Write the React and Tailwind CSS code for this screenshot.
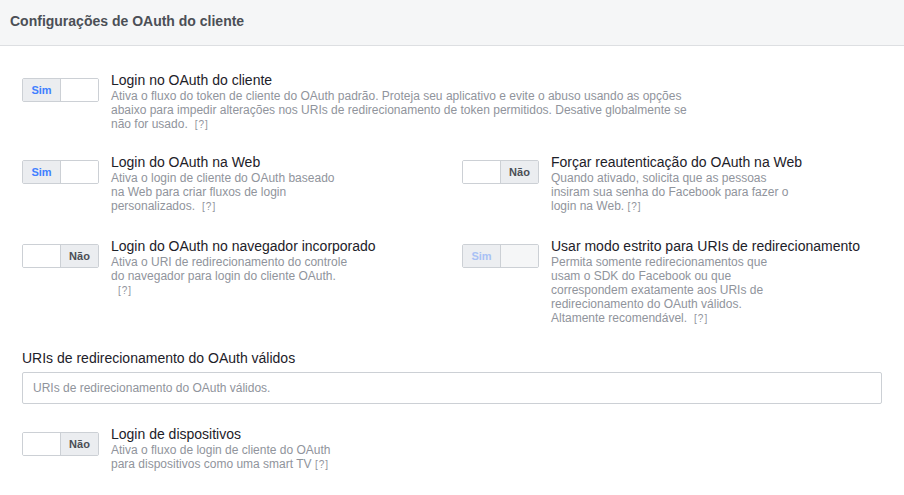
import React from "react";

const font = { fontFamily: '"Liberation Sans", Arial, Helvetica, sans-serif' };

function Toggle({ on, disabled }) {
  if (on) {
    return (
      <div className="flex w-[77px] h-[24px] shrink-0 border border-[#ccd0d5] rounded-[2px] overflow-hidden">
        <div
          className={`w-[38px] flex items-center justify-center text-[11px] font-bold border-r border-[#ccd0d5] ${
            disabled ? "bg-[#eceef1] text-[#a8c1f5]" : "bg-[#ebedf0] text-[#4080ff]"
          }`}
        >
          Sim
        </div>
        <div className={`flex-1 ${disabled ? "bg-[#f5f6f7]" : "bg-white"}`} />
      </div>
    );
  }
  return (
    <div className="flex w-[77px] h-[24px] shrink-0 border border-[#ccd0d5] rounded-[2px] overflow-hidden">
      <div className="w-[38px] bg-white border-r border-[#ccd0d5]" />
      <div className="flex-1 bg-[#ebedf0] flex items-center justify-center text-[11px] font-bold text-[#4b4f56]">
        Não
      </div>
    </div>
  );
}

function Help({ spaced = true }) {
  return spaced ? (
    <span className="inline-block ml-[7px] text-[10px] leading-[14px] tracking-[1px]">[?]</span>
  ) : (
    <>
      {" "}
      <span className="text-[10px] leading-[14px] tracking-[1px]">[?]</span>
    </>
  );
}

function Setting({ on, disabled, title, children, width = "w-[238px]" }) {
  return (
    <div className="flex gap-[12px] items-start">
      <div className="mt-[7px]">
        <Toggle on={on} disabled={disabled} />
      </div>
      <div>
        <div className="text-[14px] leading-[18px] text-[#1d2129]">{title}</div>
        <div className={`${width} text-[12px] leading-[14px] text-[#90949c]`}>{children}</div>
      </div>
    </div>
  );
}

export default function App() {
  return (
    <div className="min-h-screen bg-white" style={font}>
      {/* Header */}
      <div className="h-[46px] bg-[#f5f6f7] border-b border-[#dddfe2] px-[10px] pt-[12px]">
        <h2 className="text-[14px] leading-[18px] font-bold text-[#4b4f56]">
          Configurações de OAuth do cliente
        </h2>
      </div>

      <div className="px-[22px] pt-[25px] pb-6">
        <Setting on title="Login no OAuth do cliente" width="w-[590px]">
          Ativa o fluxo do token de cliente do OAuth padrão. Proteja seu aplicativo e evite o abuso usando as
          opções abaixo para impedir alterações nos URIs de redirecionamento de token permitidos. Desative
          globalmente se não for usado.
          <Help />
        </Setting>

        <div className="grid grid-cols-[440px_1fr] mt-[21px]">
          <Setting on title="Login do OAuth na Web">
            Ativa o login de cliente do OAuth baseado na Web para criar fluxos de login personalizados.
            <Help />
          </Setting>
          <Setting title="Forçar reautenticação do OAuth na Web">
            Quando ativado, solicita que as pessoas insiram sua senha do Facebook para fazer o login na Web.
            <Help spaced={false} />
          </Setting>
        </div>

        <div className="grid grid-cols-[440px_1fr] mt-[23px]">
          <Setting title="Login do OAuth no navegador incorporado">
            Ativa o URI de redirecionamento do controle do navegador para login do cliente OAuth.
            <Help />
          </Setting>
          <Setting on disabled title="Usar modo estrito para URIs de redirecionamento">
            Permita somente redirecionamentos que usam o SDK do Facebook ou que correspondem exatamente aos URIs
            de redirecionamento do OAuth válidos. Altamente recomendável.
            <Help />
          </Setting>
        </div>

        {/* Redirect URIs field */}
        <div className="mt-[23px] text-[14px] leading-[18px] text-[#1d2129]">
          URIs de redirecionamento do OAuth válidos
        </div>
        <div className="mt-[5px] h-[32px] border border-[#ccd0d5] rounded-[2px] px-[10px] flex items-center text-[12px] text-[#90949c]">
          URIs de redirecionamento do OAuth válidos.
        </div>

        <div className="mt-[21px]">
          <Setting title="Login de dispositivos">
            Ativa o fluxo de login de cliente do OAuth para dispositivos como uma smart TV
            <Help spaced={false} />
          </Setting>
        </div>
      </div>
    </div>
  );
}
